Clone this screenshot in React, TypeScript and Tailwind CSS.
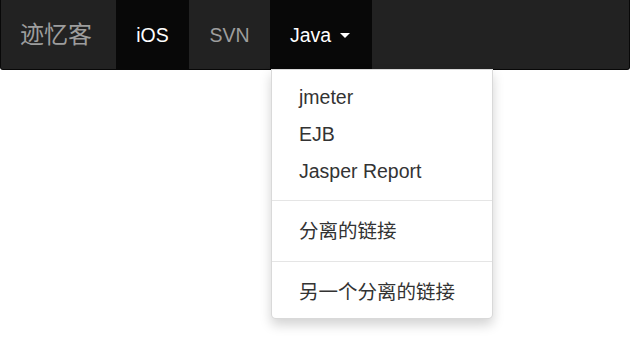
import React from 'react';

const font = { fontFamily: '"Liberation Sans", "Noto Sans CJK SC", Arial, sans-serif' };

export default function App() {
  const items = ['jmeter', 'EJB', 'Jasper Report'];

  return (
    <div className="min-h-[337px] w-[630px] bg-white" style={font}>
      <nav className="flex h-[70px] items-stretch border border-t-0 border-[#080808] bg-[#222222] rounded-b-[3px]">
        <a className="flex w-[115px] items-center pl-[19px] pt-[1px] text-[24px] text-[#9d9d9d]">迹忆客</a>
        <ul className="flex items-stretch">
          <li className="flex w-[73px] items-center justify-center bg-[#080808] pt-[2px] text-[19.5px] text-white">iOS</li>
          <li className="flex w-[81px] items-center justify-center pt-[2px] text-[19.5px] text-[#9d9d9d]">SVN</li>
          <li className="relative flex w-[102px] items-center pl-[20px] pt-[2px] text-[19.5px] text-white">
            <span className="absolute inset-0 bg-[#080808]" />
            <span className="relative">Java</span>
            <span className="relative ml-[9px] inline-block h-0 w-0 border-x-[5px] border-t-[5px] border-x-transparent border-t-white" />
            <div className="absolute left-[1px] top-[69px] z-10 w-[222px] rounded-b-[5px] border border-[rgba(0,0,0,0.15)] bg-white pt-[9px] pb-[7px] shadow-[0_6px_12px_rgba(0,0,0,0.175)]">
              {items.map((t) => (
                <div key={t} className="flex h-[37px] items-center px-[27px] text-[19.5px] text-[#333333]">
                  {t}
                </div>
              ))}
              <div className="mt-[10px] mb-[12px] h-px bg-[#e5e5e5]" />
              <div className="flex h-[37px] items-center px-[27px] text-[19.5px] text-[#333333]">分离的链接</div>
              <div className="mt-[11px] mb-[12px] h-px bg-[#e5e5e5]" />
              <div className="flex h-[37px] items-center px-[27px] text-[19.5px] text-[#333333]">另一个分离的链接</div>
            </div>
          </li>
        </ul>
      </nav>
    </div>
  );
}
